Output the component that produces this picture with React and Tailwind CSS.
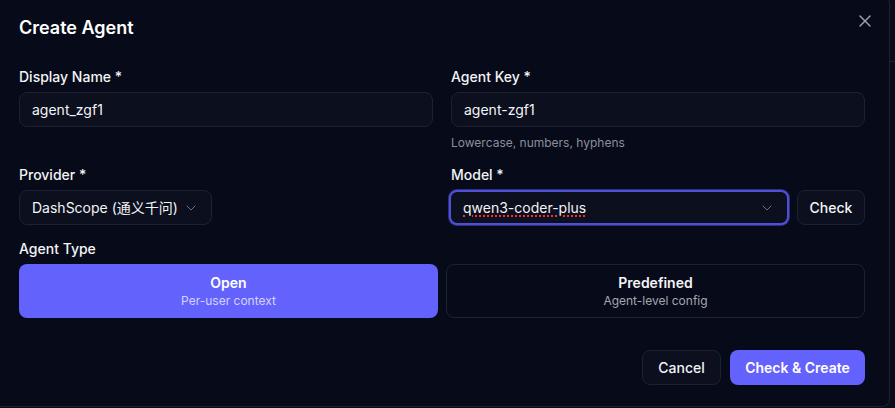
import { ChevronDown, X } from "lucide-react";

const font = { fontFamily: 'Inter, "Noto Sans CJK SC", sans-serif' };

function Label({ children }) {
  return <label className="text-sm font-medium leading-5 text-[#f3f4f6]">{children}</label>;
}

export default function App() {
  return (
    <div className="flex h-[408px] w-[895px] overflow-hidden bg-[#0a0d19]" style={font}>
      {/* Dialog */}
      <div className="relative -ml-[5px] -mt-[4px] flex h-[411px] w-[895px] shrink-0 flex-col rounded-br-lg rounded-tr-lg border-r border-b border-t border-[#1d2130] bg-[#070a18] pl-6 pr-[24px] pt-[17px]">
        <button className="absolute right-[14px] top-[14px] text-[#9ca3af]">
          <X className="h-[20px] w-[20px]" strokeWidth={1.75} />
        </button>

        <h2 className="text-lg font-semibold leading-7 text-white">Create Agent</h2>

        <div className="mt-[25px] grid grid-cols-2 gap-x-[18px] gap-y-[14px]">
          {/* Display name */}
          <div className="flex flex-col gap-[5px]">
            <Label>Display Name *</Label>
            <div className="flex h-[35px] items-center rounded-lg border border-[#1d2130] bg-[#0b0f1e] px-3 text-sm text-[#f3f4f6]">
              agent_zgf1
            </div>
          </div>

          {/* Agent key */}
          <div className="flex flex-col gap-[5px]">
            <Label>Agent Key *</Label>
            <div className="flex h-[35px] items-center rounded-lg border border-[#1d2130] bg-[#0b0f1e] px-3 text-sm text-[#f3f4f6]">
              agent-zgf1
            </div>
            <p className="mt-[3px] text-xs leading-4 text-[#8a8f9c]">Lowercase, numbers, hyphens</p>
          </div>

          {/* Provider */}
          <div className="flex flex-col gap-[5px]">
            <Label>Provider *</Label>
            <div className="flex h-[35px] w-[193px] items-center justify-between rounded-lg border border-[#1d2130] bg-[#0b0f1e] pl-3 pr-3 text-sm text-[#f3f4f6]">
              <span>DashScope (通义千问)</span>
              <ChevronDown className="h-4 w-4 text-[#6b7080]" strokeWidth={1.5} />
            </div>
          </div>

          {/* Model */}
          <div className="flex flex-col gap-[5px]">
            <Label>Model *</Label>
            <div className="flex gap-2">
              <div className="-ml-[2px] flex h-[35px] flex-1 items-center justify-between rounded-lg border-2 border-[#4f4fd8] bg-[#0b0f1e] pl-[12px] pr-3 text-sm text-[#f3f4f6] ring-1 ring-[#2e2f80]">
                <span className="underline decoration-red-500 decoration-dotted decoration-2 underline-offset-[3px]">
                  qwen3-coder-plus
                </span>
                <ChevronDown className="h-4 w-4 text-[#6b7080]" strokeWidth={1.5} />
              </div>
              <button className="flex h-[35px] w-[68px] items-center justify-center rounded-lg border border-[#1d2130] bg-[#0b0f1e] text-sm font-medium text-[#f3f4f6]">
                Check
              </button>
            </div>
          </div>
        </div>

        {/* Agent type */}
        <div className="mt-[14px] flex flex-col gap-[5px]">
          <Label>Agent Type</Label>
          <div className="grid grid-cols-2 gap-2">
            <button className="flex h-[54px] flex-col items-center justify-center rounded-lg bg-[#6462fc]">
              <span className="text-sm font-semibold leading-5 text-white">Open</span>
              <span className="text-xs leading-4 text-[#d4d3ff]">Per-user context</span>
            </button>
            <button className="flex h-[54px] flex-col items-center justify-center rounded-lg border border-[#1d2130] bg-[#070a18]">
              <span className="text-sm font-semibold leading-5 text-[#f3f4f6]">Predefined</span>
              <span className="text-xs leading-4 text-[#a3a7b2]">Agent-level config</span>
            </button>
          </div>
        </div>

        {/* Footer */}
        <div className="mt-[32px] flex justify-end gap-[9px]">
          <button className="h-[35px] w-[79px] rounded-lg border border-[#1d2130] bg-[#0b0f1e] text-sm font-medium text-[#f3f4f6]">
            Cancel
          </button>
          <button className="h-[35px] w-[135px] rounded-lg bg-[#6462fc] text-sm font-semibold text-white">
            Check &amp; Create
          </button>
        </div>
      </div>

      {/* page behind */}
      <div className="flex-1">
        <div className="h-[62px] border-b border-[#1d2130]" />
      </div>
    </div>
  );
}
